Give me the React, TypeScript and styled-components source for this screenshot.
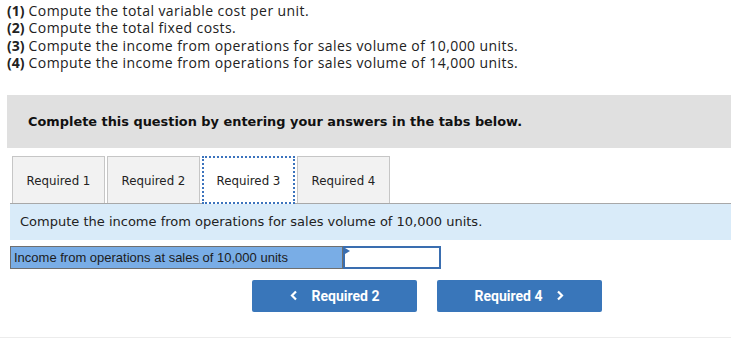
import React from 'react'
import styled, { createGlobalStyle } from 'styled-components'

const GlobalStyle = createGlobalStyle`
    body {
        margin: 0;
        background: #fff;
    }
`

const Page = styled.div`
    width: 731px;
    height: 338px;
    border-bottom: 1px solid #ececec;
    box-sizing: border-box;
`

const Parts = styled.div`
    padding: 2px 0 0 7px;
    font-family: 'Open Sans', 'Lato', sans-serif;
    font-size: 14px;
    line-height: 17.4px;
    letter-spacing: 0.42px;
    color: #222;
`

const PartLine = styled.div`
    b {
        font-weight: 700;
        letter-spacing: 0;
    }
`

const Instruction = styled.div`
    margin: 23px 0 0 7px;
    height: 53px;
    background: #e0e0e0;
    display: flex;
    align-items: center;
    padding-left: 21px;
    font-family: 'DejaVu Sans', Verdana, sans-serif;
    font-weight: 700;
    font-size: 12.9px;
    color: #111;
`

const TabBar = styled.div`
    display: flex;
    gap: 2px;
    margin: 8px 0 0 12px;
    height: 47px;
`

const Tab = styled.div<{ $active?: boolean }>`
    width: 93px;
    box-sizing: border-box;
    display: flex;
    align-items: center;
    justify-content: center;
    padding-top: 3px;
    font-family: 'DejaVu Sans', Verdana, sans-serif;
    font-size: 11.8px;
    color: #222;
    background: ${p => (p.$active ? '#fff' : '#f2f2f2')};
    border: ${p => (p.$active ? '2px dotted #3b73bd' : '1px solid #c6c6c6')};
    border-bottom: ${p => (p.$active ? '2px dotted #3b73bd' : 'none')};
    position: relative;
    z-index: ${p => (p.$active ? 2 : 0)};
    margin-bottom: ${p => (p.$active ? '-1px' : '0')};
`

const Panel = styled.div`
    margin-left: 10px;
    border-top: 1px solid #a8a8a8;
    background: #d9ebf9;
    height: 36px;
    display: flex;
    align-items: center;
    padding-left: 10px;
    font-family: 'DejaVu Sans', Verdana, sans-serif;
    font-size: 13px;
    color: #222;
`

const AnswerRow = styled.div`
    display: flex;
    margin: 6px 0 0 10px;
    height: 23px;
`

const AnswerLabel = styled.div`
    width: 333px;
    box-sizing: border-box;
    background: #79ade6;
    border: 1px solid #6f6f6f;
    display: flex;
    align-items: center;
    padding-left: 3px;
    font-family: 'Liberation Sans', Arial, sans-serif;
    font-size: 13px;
    color: #1c1c1c;
`

const AnswerInput = styled.div`
    width: 98px;
    box-sizing: border-box;
    border: 2px solid #3a6eb0;
    background: #fff;
    position: relative;
`

const Flag = styled.span`
    position: absolute;
    left: 0;
    top: 0;
    width: 0;
    height: 0;
    border-top: 3px solid transparent;
    border-bottom: 3px solid transparent;
    border-left: 5px solid #3a6eb0;
`

const NavRow = styled.div`
    display: flex;
    gap: 20px;
    margin-top: 11px;
    padding-left: 252px;
`

const NavButton = styled.div`
    width: 165px;
    height: 32px;
    border-radius: 2px;
    background: #3976ba;
    color: #fff;
    display: flex;
    align-items: center;
    justify-content: center;
    gap: 14px;
    font-family: 'Roboto', 'Liberation Sans', sans-serif;
    font-weight: 700;
    font-size: 14px;
`

const Chevron: React.FC<{ dir: 'left' | 'right' }> = ({ dir }) => (
    <svg width="8" height="11" viewBox="0 0 8 11">
        <path
            d={dir === 'left' ? 'M6 1.5 L2 5.5 L6 9.5' : 'M2 1.5 L6 5.5 L2 9.5'}
            fill="none"
            stroke="#fff"
            strokeWidth="2.2"
        />
    </svg>
)

const parts = [
    'Compute the total variable cost per unit.',
    'Compute the total fixed costs.',
    'Compute the income from operations for sales volume of 10,000 units.',
    'Compute the income from operations for sales volume of 14,000 units.',
]

const App: React.FC = () => {
    return (
        <Page>
            <GlobalStyle />
            <Parts>
                {parts.map((text, i) => (
                    <PartLine key={i}>
                        <b>({i + 1})</b> {text}
                    </PartLine>
                ))}
            </Parts>
            <Instruction>Complete this question by entering your answers in the tabs below.</Instruction>
            <TabBar>
                <Tab>Required 1</Tab>
                <Tab>Required 2</Tab>
                <Tab $active>Required 3</Tab>
                <Tab>Required 4</Tab>
            </TabBar>
            <Panel>Compute the income from operations for sales volume of 10,000 units.</Panel>
            <AnswerRow>
                <AnswerLabel>Income from operations at sales of 10,000 units</AnswerLabel>
                <AnswerInput>
                    <Flag />
                </AnswerInput>
            </AnswerRow>
            <NavRow>
                <NavButton>
                    <Chevron dir="left" />
                    <span>Required 2</span>
                </NavButton>
                <NavButton>
                    <span>Required 4</span>
                    <Chevron dir="right" />
                </NavButton>
            </NavRow>
        </Page>
    )
}

export default App
